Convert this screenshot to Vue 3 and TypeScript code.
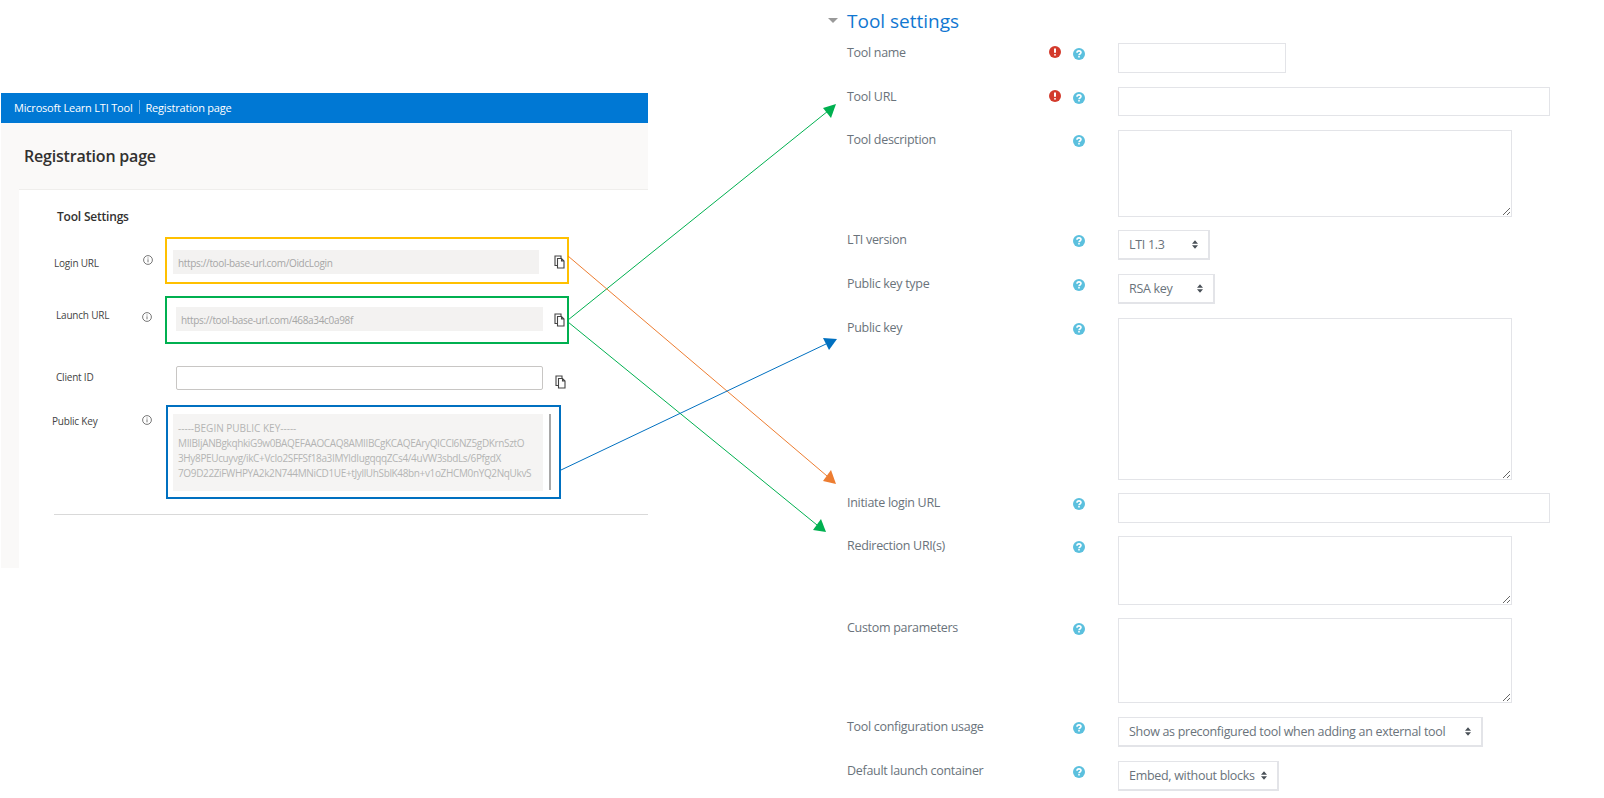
<script setup lang="ts">
interface FormRow {
  label: string;
  height: number;
  step: number;
  required?: boolean;
  kind: "input" | "textarea" | "select";
  width: number;
  value?: string;
}

const rows: FormRow[] = [
  { label: "Tool name", height: 30, step: 44, required: true, kind: "input", width: 168 },
  { label: "Tool URL", height: 29, step: 43, required: true, kind: "input", width: 432 },
  { label: "Tool description", height: 87, step: 100, kind: "textarea", width: 394 },
  { label: "LTI version", height: 30, step: 44, kind: "select", width: 92, value: "LTI 1.3" },
  { label: "Public key type", height: 30, step: 44, kind: "select", width: 97, value: "RSA key" },
  { label: "Public key", height: 162, step: 175, kind: "textarea", width: 394 },
  { label: "Initiate login URL", height: 30, step: 43, kind: "input", width: 432 },
  { label: "Redirection URI(s)", height: 69, step: 82, kind: "textarea", width: 394 },
  { label: "Custom parameters", height: 85, step: 99, kind: "textarea", width: 394 },
  { label: "Tool configuration usage", height: 30, step: 44, kind: "select", width: 365, value: "Show as preconfigured tool when adding an external tool" },
  { label: "Default launch container", height: 30, step: 0, kind: "select", width: 161, value: "Embed, without blocks" },
];

const keyLines = [
  "-----BEGIN PUBLIC KEY-----",
  "MIIBIjANBgkqhkiG9w0BAQEFAAOCAQ8AMIIBCgKCAQEAryQICCl6NZ5gDKrnSztO",
  "3Hy8PEUcuyvg/ikC+VcIo2SFFSf18a3IMYldIugqqqZCs4/4uVW3sbdLs/6PfgdX",
  "7O9D22ZiFWHPYA2k2N744MNiCD1UE+tJyllUhSblK48bn+v1oZHCM0nYQ2NqUkvS",
];

const arrows = [
  { x1: 568, y1: 320, x2: 828, y2: 111, head: "836,104 823,108 831,118", color: "#00b050" },
  { x1: 568, y1: 256, x2: 827, y2: 476, head: "836,484 823,481 831,470", color: "#ed7d31" },
  { x1: 568, y1: 322, x2: 817, y2: 525, head: "826,532 813,530 821,519", color: "#00b050" },
  { x1: 561, y1: 470, x2: 826, y2: 344, head: "837,339 823,338 829,350", color: "#0070c0" },
];
</script>

<template>
  <div class="page">
    <section class="lti">
      <div class="bar">
        <span>Microsoft Learn LTI Tool</span>
        <i class="bar-sep"></i>
        <span>Registration page</span>
      </div>
      <h1 class="lti-title">Registration page</h1>
      <div class="card">
        <h2>Tool Settings</h2>

        <div class="lti-row login">
          <span class="lti-label">Login URL</span>
          <svg class="info" viewBox="0 0 10 10"><circle cx="5" cy="5" r="4.4" /><path d="M5 4.3v3M5 2.5v1" /></svg>
          <div class="outline yellow">
            <div class="ro">https://tool-base-url.com/OidcLogin</div>
            <svg class="copy" viewBox="0 0 11 14"><path d="M7 3V1H1v9.500h2.500M3.500 3.500H7.500L10 6v7H3.500zM7.500 3.500V6H10" /></svg>
          </div>
        </div>

        <div class="lti-row launch">
          <span class="lti-label">Launch URL</span>
          <svg class="info" viewBox="0 0 10 10"><circle cx="5" cy="5" r="4.4" /><path d="M5 4.3v3M5 2.5v1" /></svg>
          <div class="outline green">
            <div class="ro">https://tool-base-url.com/468a34c0a98f</div>
            <svg class="copy" viewBox="0 0 11 14"><path d="M7 3V1H1v9.500h2.500M3.500 3.500H7.500L10 6v7H3.500zM7.500 3.500V6H10" /></svg>
          </div>
        </div>

        <div class="lti-row client">
          <span class="lti-label">Client ID</span>
          <input class="client-input" type="text" />
          <svg class="copy" viewBox="0 0 11 14"><path d="M7 3V1H1v9.500h2.500M3.500 3.500H7.500L10 6v7H3.500zM7.500 3.500V6H10" /></svg>
        </div>

        <div class="lti-row pubkey">
          <span class="lti-label">Public Key</span>
          <svg class="info" viewBox="0 0 10 10"><circle cx="5" cy="5" r="4.4" /><path d="M5 4.3v3M5 2.5v1" /></svg>
          <div class="outline blue">
            <div class="key">
              <div v-for="line in keyLines" :key="line">{{ line }}</div>
            </div>
            <i class="scroll"></i>
          </div>
        </div>

        <hr class="divider" />
      </div>
    </section>

    <section class="moodle">
      <h2 class="moodle-title"><i class="caret"></i>Tool settings</h2>
      <div
        v-for="row in rows"
        :key="row.label"
        class="form-row"
        :style="{ height: row.step ? row.step + 'px' : undefined }"
      >
        <span class="form-label">{{ row.label }}</span>
        <span class="req">
          <svg v-if="row.required" viewBox="0 0 12 12"><circle cx="6" cy="6" r="6" fill="#d33a2c" /><path d="M6 2.500v4.200M6 8.300v1.200" stroke="#fff" stroke-width="2" /></svg>
        </span>
        <svg class="help" viewBox="0 0 12 12">
          <circle cx="6" cy="6" r="6" fill="#5bc0de" />
          <path d="M4 4.700C4 3.400 5 2.900 6 2.900s2 .6 2 1.700c0 1.400-2 1.400-2 2.700M6 8v1.400" fill="none" stroke="#fff" stroke-width="1.600" />
        </svg>
        <input
          v-if="row.kind === 'input'"
          class="ctl"
          type="text"
          :style="{ width: row.width + 'px', height: row.height + 'px' }"
        />
        <textarea
          v-else-if="row.kind === 'textarea'"
          class="ctl"
          :style="{ width: row.width + 'px', height: row.height + 'px' }"
        ></textarea>
        <div v-else class="ctl select" :style="{ width: row.width + 'px', height: row.height + 'px' }">
          <span>{{ row.value }}</span>
          <svg viewBox="0 0 7 10"><path d="M3.500 0L7 4H0zM3.500 10L0 6h7z" fill="#495057" /></svg>
        </div>
      </div>
    </section>

    <svg class="arrows" viewBox="0 0 1604 798">
      <g v-for="a in arrows" :key="a.head">
        <line :x1="a.x1" :y1="a.y1" :x2="a.x2" :y2="a.y2" :stroke="a.color" stroke-width="1" />
        <polygon :points="a.head" :fill="a.color" />
      </g>
    </svg>
  </div>
</template>

<style scoped>
.page {
  position: relative;
  display: flex;
  width: 1604px;
  height: 798px;
  overflow: hidden;
  background: #fff;
  font-family: "Open Sans", "Noto Sans", sans-serif;
}

.arrows {
  position: absolute;
  left: 0;
  top: 0;
  width: 1604px;
  height: 798px;
  pointer-events: none;
}

/* left screenshot */
.lti {
  flex: none;
  width: 647px;
  height: 475px;
  margin: 93px 0 0 1px;
  background: #faf9f8;
  display: flex;
  flex-direction: column;
}

.bar {
  display: flex;
  align-items: center;
  height: 30px;
  box-sizing: border-box;
  padding: 0 0 2px 13px;
  background: #0078d4;
  color: #fff;
  font-size: 11px;
  letter-spacing: -0.2px;
}

.bar-sep {
  width: 1px;
  height: 14px;
  margin: 0 6px 0 6px;
  background: #6db0e6;
}

.lti-title {
  margin: 0;
  height: 66px;
  padding: 21px 0 0 23px;
  box-sizing: border-box;
  font-size: 16px;
  line-height: 24px;
  font-weight: 600;
  letter-spacing: -0.2px;
  color: #323130;
}

.card {
  flex: 1;
  margin-left: 18px;
  padding-top: 19px;
  background: #fff;
  border-top: 1px solid #efeeec;
}

.card h2 {
  margin: 0 0 12px 38px;
  font-size: 12px;
  line-height: 16px;
  font-weight: 600;
  letter-spacing: -0.2px;
  color: #323130;
}

.lti-row {
  display: flex;
  align-items: flex-start;
  color: #444;
  font-size: 10px;
  letter-spacing: -0.2px;
}

.lti-label {
  line-height: 14px;
}

.info {
  flex: none;
  width: 10px;
  height: 10px;
  fill: none;
  stroke: #555;
  stroke-width: 0.800;
}

.outline {
  flex: none;
  display: flex;
  align-items: flex-start;
  box-sizing: border-box;
  border: 2px solid;
}

.yellow {
  width: 404px;
  height: 47px;
  margin-left: 12px;
  padding: 11px 0 0 6px;
  border-color: #ffc000;
}

.green {
  width: 404px;
  height: 48px;
  margin-left: 13px;
  padding: 9px 0 0 9px;
  border-color: #00b050;
}

.blue {
  width: 395px;
  height: 94px;
  margin-left: 14px;
  padding: 7px 0 0 5px;
  border-color: #0070c0;
}

.ro {
  flex: none;
  width: 366px;
  height: 24px;
  padding-left: 5px;
  box-sizing: border-box;
  background: #f3f2f1;
  color: #a6a6a6;
  font-size: 10px;
  line-height: 26px;
  letter-spacing: -0.34px;
}

.green .ro {
  width: 367px;
}

.copy {
  flex: none;
  width: 11px;
  height: 14px;
  margin: 5px 0 0 15px;
  fill: none;
  stroke: #444;
  stroke-width: 1.100;
}

.login {
  margin: 0;
}

.login .lti-label {
  width: 89px;
  margin: 19px 0 0 35px;
}

.login .info {
  margin-top: 18px;
}

.launch {
  margin-top: 12px;
}

.launch .lti-label {
  width: 86px;
  margin: 12px 0 0 37px;
}

.launch .info {
  margin-top: 16px;
}

.launch .copy {
  margin: 6px 0 0 11px;
}

.client {
  margin-top: 22px;
}

.client .lti-label {
  width: 120px;
  margin: 4px 0 0 37px;
}

.client-input {
  flex: none;
  width: 367px;
  height: 24px;
  box-sizing: border-box;
  margin: 0;
  border: 1px solid #c8c6c4;
  border-radius: 2px;
  background: #fff;
}

.client .copy {
  margin: 9px 0 0 12px;
}

.pubkey {
  margin-top: 15px;
}

.pubkey .lti-label {
  width: 90px;
  margin: 9px 0 0 33px;
}

.pubkey .info {
  margin-top: 10px;
}

.key {
  flex: none;
  width: 370px;
  height: 77px;
  padding: 7px 0 0 5px;
  box-sizing: border-box;
  background: #f5f4f3;
  color: #b4b4b4;
  font-size: 10px;
  line-height: 15px;
  letter-spacing: -0.36px;
  white-space: nowrap;
  overflow: hidden;
}

.key div:first-child {
  letter-spacing: 0;
}

.scroll {
  flex: none;
  width: 2px;
  height: 76px;
  margin-left: 6px;
  background: #a8a8a8;
}

.divider {
  height: 1px;
  margin: 15px 0 0 35px;
  border: 0;
  background: #d9d9d9;
}

/* right screenshot */
.moodle {
  flex: none;
  margin-left: 180px;
  padding-left: 19px;
}

.moodle-title {
  position: relative;
  height: 43px;
  margin: 0;
  padding-top: 7px;
  box-sizing: border-box;
  font-size: 19px;
  line-height: 28px;
  font-weight: 400;
  color: #1177d1;
}

.caret {
  position: absolute;
  left: -19px;
  top: 18px;
  width: 0;
  height: 0;
  border-style: solid;
  border-width: 5px 5px 0;
  border-color: #999 transparent transparent;
}

.form-row {
  display: flex;
  align-items: flex-start;
  font-size: 12.500px;
  letter-spacing: -0.3px;
  color: #6a737b;
}

.form-label {
  flex: none;
  width: 202px;
  line-height: 19px;
}

.req {
  flex: none;
  width: 12px;
  height: 12px;
  margin: 3px 12px 0 0;
}

.req svg {
  display: block;
}

.help {
  flex: none;
  width: 12px;
  height: 12px;
  margin: 5px 33px 0 0;
}

.ctl {
  display: block;
  box-sizing: border-box;
  margin: 0;
  padding: 0;
  border: 1px solid #e3e4e8;
  background: #fff;
  border-radius: 0;
  outline: none;
}

.select {
  display: flex;
  align-items: center;
  justify-content: space-between;
  padding: 0 10px 0 10px;
  color: #6a737b;
  white-space: nowrap;
  border-width: 1px 2px 2px 1px;
}

.select svg {
  flex: none;
  width: 6px;
  height: 9px;
}
</style>

<style>
html,
body {
  background: #fff;
}
</style>
